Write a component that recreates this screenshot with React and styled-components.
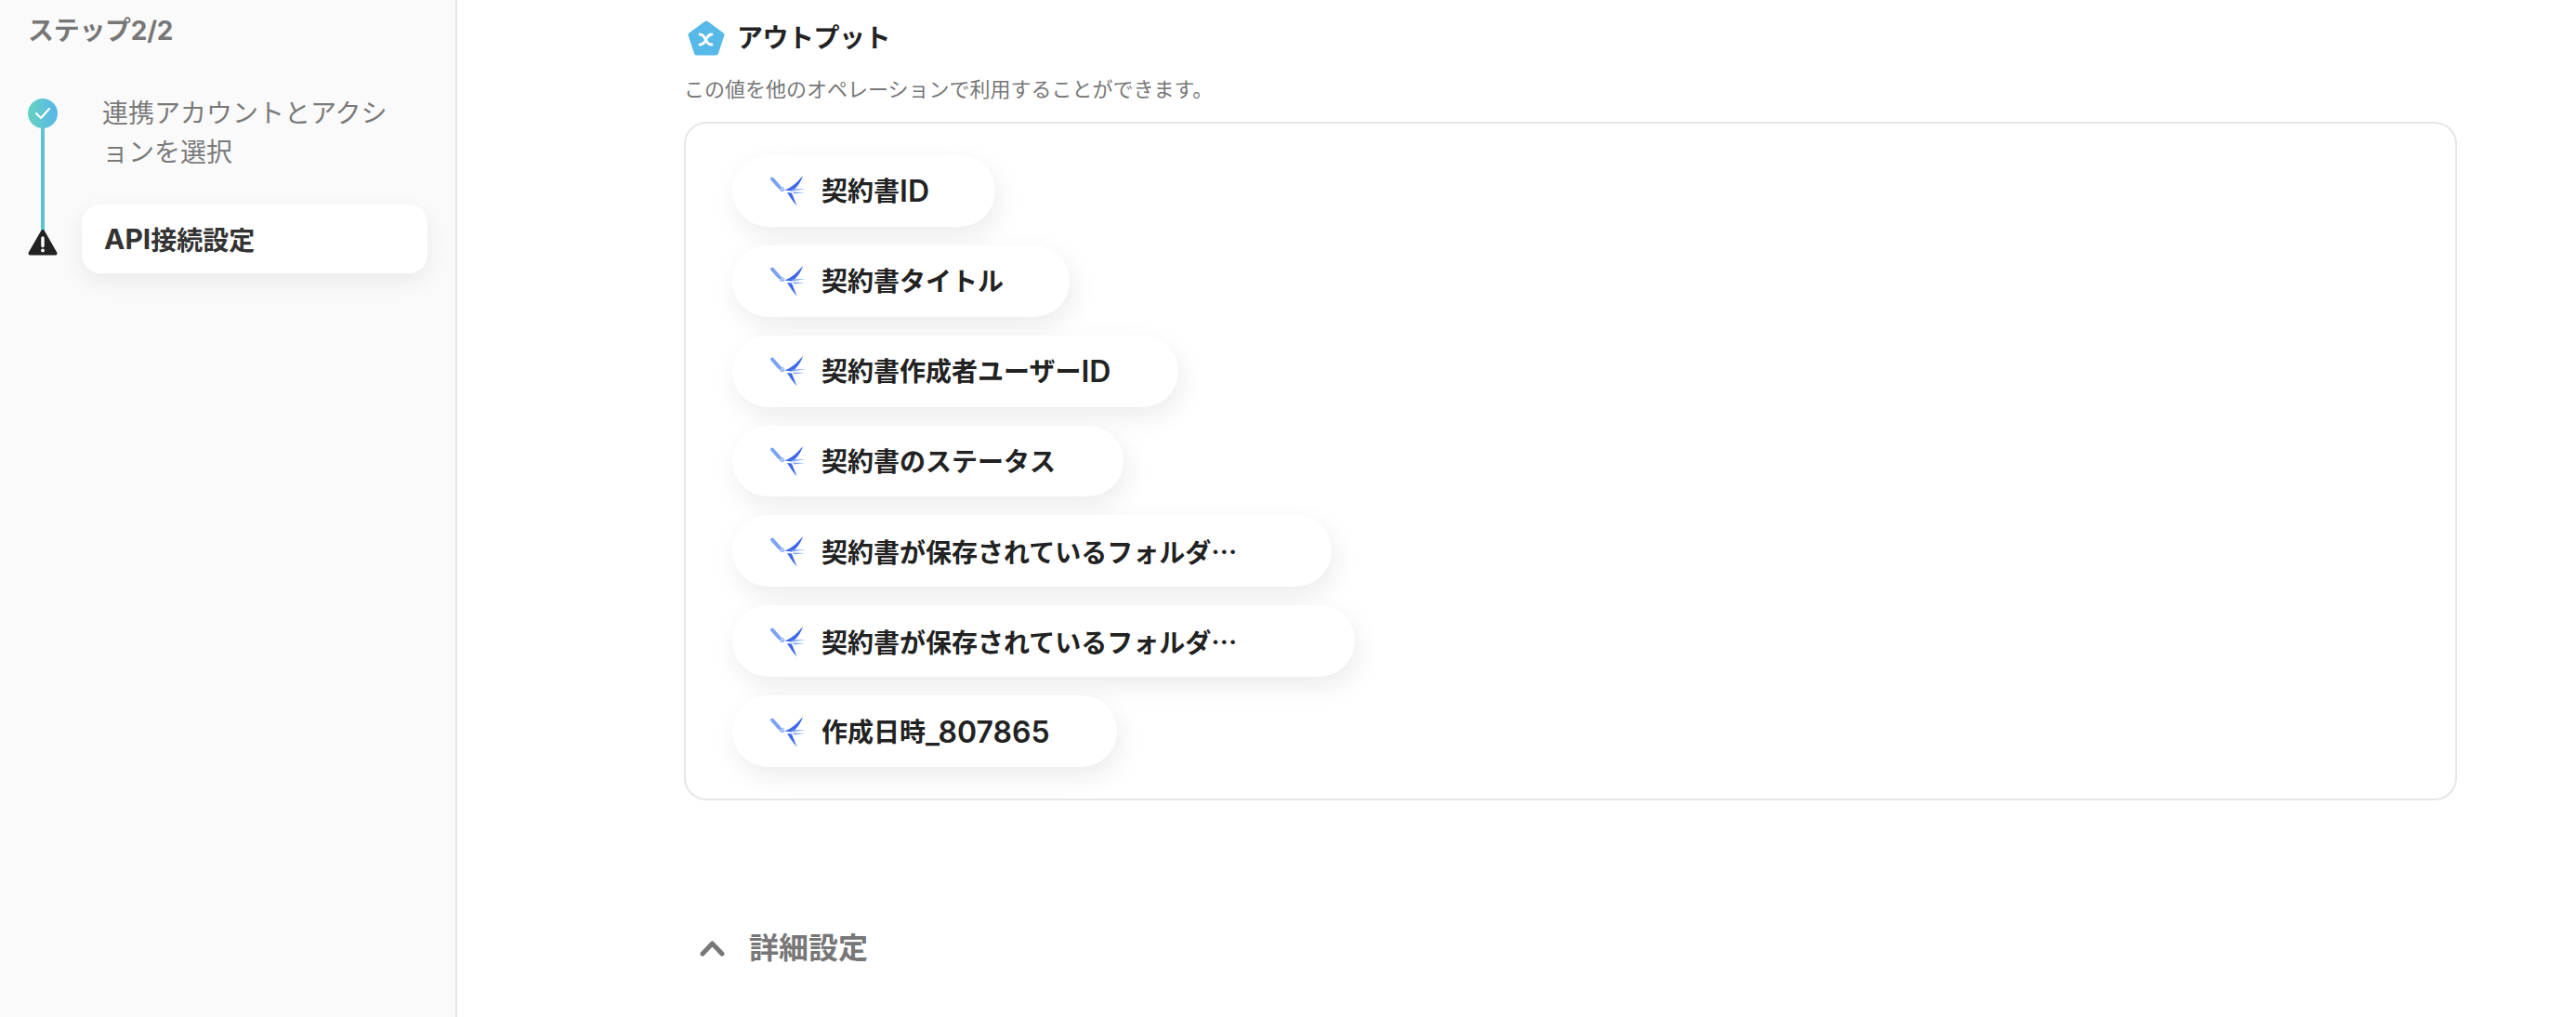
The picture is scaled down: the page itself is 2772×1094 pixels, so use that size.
import React from 'react';
import styled, { createGlobalStyle } from 'styled-components';

const outputs = [
  { label: '契約書ID', width: 283 },
  { label: '契約書タイトル', width: 363 },
  { label: '契約書作成者ユーザーID', width: 480 },
  { label: '契約書のステータス', width: 421 },
  { label: '契約書が保存されているフォルダ', width: 645, truncated: true },
  { label: '契約書が保存されているフォルダ', width: 670, truncated: true },
  { label: '作成日時_807865', width: 414 },
];

// the latin part of a label runs larger than the kana and kanji around it
const withLatin = (label) =>
  label.split(/([A-Za-z0-9_]+)/).map((part, i) =>
    /^[A-Za-z0-9_]+$/.test(part) ? <Latin key={i}>{part}</Latin> : part
  );

const App = () => (
  <Page lang="ja">
    <GlobalStyle />
    <Sidebar>
      <StepTitle>ステップ2/2</StepTitle>
      <Steps>
        <Rail>
          <CheckBadge>
            <svg width="18" height="14" viewBox="0 0 18 14" fill="none">
              <path d="M2 7l5 5 9-10" stroke="#fff" strokeWidth="2.2" strokeLinecap="round" strokeLinejoin="round" />
            </svg>
          </CheckBadge>
          <RailLine />
          <WarningIcon />
        </Rail>
        <StepLabels>
          <StepLabel>
            連携アカウントとアクシ
            <br />
            ョンを選択
          </StepLabel>
          <ActiveStep>
            <ApiText>API</ApiText>接続設定
          </ActiveStep>
        </StepLabels>
      </Steps>
    </Sidebar>
    <Main>
      <SectionHeader>
        <VariableIcon />
        <SectionTitle>アウトプット</SectionTitle>
      </SectionHeader>
      <Description>この値を他のオペレーションで利用することができます。</Description>
      <OutputBox>
        {outputs.map((item, i) => (
          <Pill key={i} $width={item.width}>
            <BirdIcon />
            <PillText>
              {withLatin(item.label)}
              {item.truncated && <Dots>…</Dots>}
            </PillText>
          </Pill>
        ))}
      </OutputBox>
      <Details>
        <svg width="27" height="18" viewBox="0 0 27 18" fill="none">
          <path d="M3 15L13.5 4 24 15" stroke="#777" strokeWidth="5" strokeLinecap="round" strokeLinejoin="round" />
        </svg>
        <DetailsLabel>詳細設定</DetailsLabel>
      </Details>
    </Main>
  </Page>
);

const WarningIcon = () => (
  <svg width="32" height="30" viewBox="0 0 32 30" style={{ marginTop: -3, flexShrink: 0 }}>
    <path d="M16 3L29.5 26.500H2.500Z" fill="#222" stroke="#222" strokeWidth="4" strokeLinejoin="round" />
    <path d="M16 10v8.500" stroke="#fff" strokeWidth="3.400" strokeLinecap="round" />
    <circle cx="16" cy="23.400" r="1.900" fill="#fff" />
  </svg>
);

const VariableIcon = () => (
  <svg width="42" height="40" viewBox="0 0 42 40">
    <path d="M21 4L38 16.500 31.500 36H10.500L4 16.500Z" fill="#56b9e8" stroke="#56b9e8" strokeWidth="5" strokeLinejoin="round" />
    <path d="M14 16c3.500 0 4.500 2 6 5s2.500 6 7 6M27 16c-3.500 0-4.500 2-6 5s-2.500 6-7 6" fill="none" stroke="#fff" strokeWidth="2.800" strokeLinecap="round" />
  </svg>
);

const BirdIcon = () => (
  <svg width="42" height="38" viewBox="0 0 42 38" style={{ flexShrink: 0 }}>
    <path d="M5 6.500L12.500 15" stroke="#7ba3f2" strokeWidth="4" strokeLinecap="round" />
    <path d="M12.500 15L17 19" stroke="#7ba3f2" strokeWidth="1.400" />
    <circle cx="15.500" cy="17.500" r="2.200" fill="none" stroke="#7ba3f2" strokeWidth="1" />
    <path d="M18 18.500C25 16.500 32 10 38 3C36 10 31 16.500 26 19.500Z" fill="#3d68ea" />
    <path d="M21 21L26 21.500L31.500 35.500C27.500 31 24 26 21 21Z" fill="#3d68ea" />
    <path d="M25 17.500L41 17L27 19.500Z" fill="#7ba3f2" />
    <path d="M27 20.500L40 21L28.500 22.500Z" fill="#7ba3f2" />
  </svg>
);

const GlobalStyle = createGlobalStyle`
  html, body {
    margin: 0;
    padding: 0;
    background: #fff;
  }
  body {
    font-family: "Inter", "Noto Sans CJK JP", sans-serif;
    overflow: hidden;
  }
`;

const Page = styled.div`
  display: flex;
  height: 1094px;
  overflow: hidden;
`;

const Sidebar = styled.aside`
  width: 490px;
  flex-shrink: 0;
  box-sizing: content-box;
  background: #fafafa;
  border-right: 2px solid #e5e5e5;
  padding-top: 13px;
`;

const StepTitle = styled.div`
  margin-left: 30px;
  font-size: 28px;
  line-height: 40px;
  font-weight: 700;
  letter-spacing: -0.3px;
  color: #777;
`;

const Steps = styled.div`
  display: flex;
  gap: 26px;
  margin: 48px 0 0 30px;
`;

const Rail = styled.div`
  width: 32px;
  margin-top: 5px;
  display: flex;
  flex-direction: column;
  align-items: center;
`;

const CheckBadge = styled.div`
  width: 32px;
  height: 32px;
  flex-shrink: 0;
  border-radius: 50%;
  background: linear-gradient(90deg, #66d3bf, #56b6ea);
  display: flex;
  align-items: center;
  justify-content: center;
`;

const RailLine = styled.div`
  width: 4px;
  height: 111px;
  background: #5cc6d0;
`;

const StepLabels = styled.div`
  width: 372px;
  display: flex;
  flex-direction: column;
`;

const StepLabel = styled.div`
  padding-left: 22px;
  height: 119px;
  font-size: 28px;
  line-height: 42px;
  color: #7a7a7a;
`;

const ActiveStep = styled.div`
  height: 74px;
  display: flex;
  align-items: center;
  padding-left: 24px;
  border-radius: 20px;
  background: #fff;
  box-shadow: 0 8px 24px rgba(0, 0, 0, 0.07);
  font-size: 28px;
  font-weight: 700;
  color: #333;
`;

const ApiText = styled.span`
  font-size: 30px;
`;

const Main = styled.main`
  flex: 1;
  padding: 22px 128px 0 244px;
  box-sizing: border-box;
`;

const SectionHeader = styled.div`
  display: flex;
  align-items: center;
  gap: 12px;
  margin-left: 3px;
  height: 38px;
`;

const SectionTitle = styled.h2`
  margin: 0;
  font-size: 28px;
  line-height: 38px;
  font-weight: 700;
  letter-spacing: -0.5px;
  color: #222;
`;

const Description = styled.p`
  margin: 20px 0 19px;
  font-size: 22px;
  line-height: 32px;
  color: #777;
`;

const OutputBox = styled.div`
  box-sizing: border-box;
  height: 730px;
  padding: 34px 50px;
  border: 2px solid #e6e6e6;
  border-radius: 24px;
  display: flex;
  flex-direction: column;
  align-items: flex-start;
  gap: 20px;
`;

const Pill = styled.div`
  box-sizing: border-box;
  width: ${(p) => p.$width}px;
  height: 77px;
  display: flex;
  align-items: center;
  gap: 16px;
  padding-left: 38px;
  border-radius: 39px;
  background: #fff;
  box-shadow: 4px 10px 28px rgba(0, 0, 0, 0.08);
`;

const PillText = styled.span`
  padding-top: 2px;
  font-size: 28px;
  line-height: 40px;
  font-weight: 600;
  color: #222;
  white-space: nowrap;
`;

const Latin = styled.span`
  font-size: 32px;
  line-height: 40px;
  vertical-align: -1px;
`;

const Dots = styled.span`
  font-family: "Noto Sans CJK JP", sans-serif;
`;

const Details = styled.div`
  display: flex;
  align-items: center;
  gap: 26px;
  margin: 136px 0 0 17px;
`;

const DetailsLabel = styled.span`
  font-size: 32px;
  line-height: 46px;
  font-weight: 700;
  color: #777;
`;

export default App;
